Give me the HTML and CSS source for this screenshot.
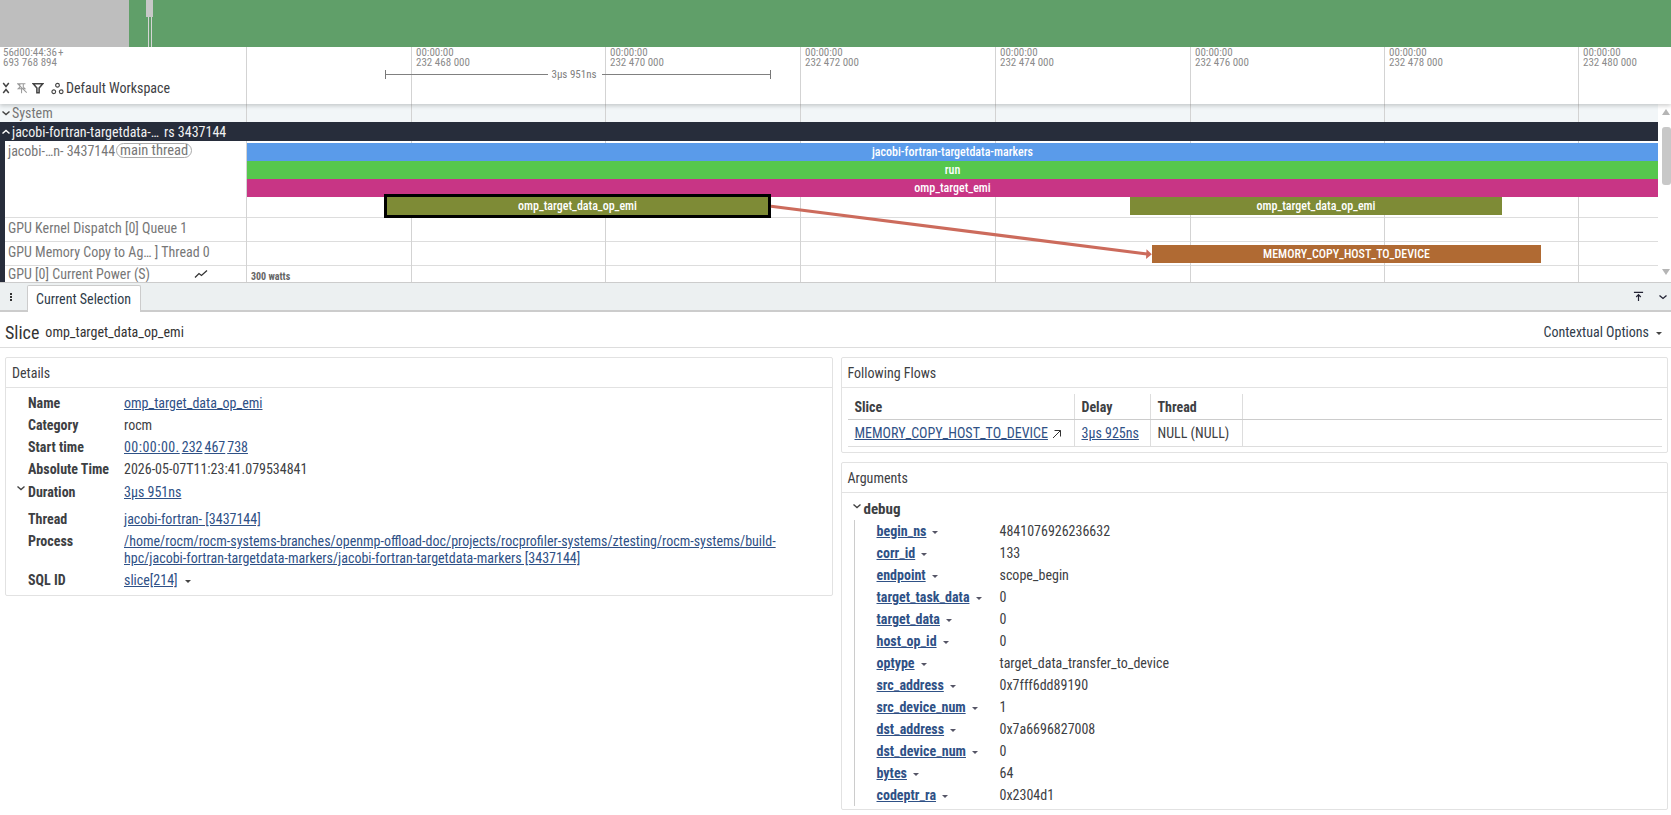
FILE: index.html
```html
<!DOCTYPE html>
<html lang="en">
<head>
<meta charset="utf-8">
<title>Trace viewer</title>
<link rel="stylesheet" href="styles.css">
</head>
<body>
<div class="app">
  <div class="overview">
    <div class="ov-gray"></div>
    <div class="ov-green"></div>
    <div class="ov-handle"></div>
    <div class="ov-line"></div>
  </div>

  <div class="timeline">
    <div class="ticks">
      <div class="tick" style="left:246px"></div>
      <div class="tick" style="left:411px"><span>00:00:00<br>232 468 000</span></div>
      <div class="tick" style="left:605px"><span>00:00:00<br>232 470 000</span></div>
      <div class="tick" style="left:800px"><span>00:00:00<br>232 472 000</span></div>
      <div class="tick" style="left:995px"><span>00:00:00<br>232 474 000</span></div>
      <div class="tick" style="left:1190px"><span>00:00:00<br>232 476 000</span></div>
      <div class="tick" style="left:1384px"><span>00:00:00<br>232 478 000</span></div>
      <div class="tick" style="left:1578px"><span>00:00:00<br>232 480 000</span></div>
    </div>

    <div class="header">
      <div class="header-left">
        <div class="origin">56d00:44:36<span class="thin">+</span><br>693 768 894</div>
        <div class="toolbar">
          <svg class="ic ic-collapse" viewBox="0 0 8 12"><path d="M1.200 1 4 4.500 6.800 1M1.200 11 4 7.500 6.800 11" fill="none" stroke="#444" stroke-width="1.500"/></svg>
          <svg class="ic ic-pin" viewBox="0 0 14 14"><path d="M2 2h9M4.500 2v4L2.500 8h8l-2-2V2M6.500 8v5M1.500 1.500l11 11" fill="none" stroke="#999" stroke-width="1.200"/></svg>
          <svg class="ic ic-filter" viewBox="0 0 14 14"><path d="M1.500 2h11L8.300 7v5.500H5.700V7z" fill="none" stroke="#444" stroke-width="1.800"/></svg>
          <svg class="ic ic-ws" viewBox="0 0 14 14"><g fill="none" stroke="#444" stroke-width="1.200"><circle cx="7" cy="3.500" r="2"/><circle cx="3" cy="10.500" r="2"/><circle cx="11" cy="10.500" r="2"/></g></svg>
          <span class="ws-name">Default Workspace</span>
        </div>
      </div>
      <div class="measure">
        <span class="measure-label">3µs 951ns</span>
      </div>
    </div>

    <div class="tracks">
      <div class="tracks-main">
        <div class="sys-row">
          <svg class="chev" viewBox="0 0 10 10"><path d="M1.500 3.500 5 6.500 8.500 3.500" fill="none" stroke="#444" stroke-width="1.500"/></svg>
          <span>System</span>
        </div>
        <div class="group-row">
          <svg class="chev" viewBox="0 0 10 10"><path d="M1.500 6.500 5 3.500 8.500 6.500" fill="none" stroke="#fff" stroke-width="1.500"/></svg>
          <span class="group-name">jacobi-fortran-targetdata-…</span>
          <span class="group-pid">rs 3437144</span>
        </div>
        <div class="rows">
          <div class="row row-thread">
            <div class="label"><span>jacobi-…n- 3437144</span><span class="chip">main thread</span></div>
            <div class="lane">
              <div class="slice s-blue">jacobi-fortran-targetdata-markers</div>
              <div class="slice s-green">run</div>
              <div class="slice s-magenta">omp_target_emi</div>
              <div class="slice s-olive s-selected">omp_target_data_op_emi</div>
              <div class="slice s-olive s-olive2">omp_target_data_op_emi</div>
            </div>
          </div>
          <div class="row row-gpu">
            <div class="label">GPU Kernel Dispatch [0] Queue 1</div>
            <div class="lane"></div>
          </div>
          <div class="row row-gpu">
            <div class="label">GPU Memory Copy to Ag… ] Thread 0</div>
            <div class="lane">
              <div class="slice s-orange">MEMORY_COPY_HOST_TO_DEVICE</div>
            </div>
          </div>
          <div class="row row-power">
            <div class="label">GPU [0] Current Power (S)
              <svg class="ic-line" viewBox="0 0 14 10"><path d="M1 8.500 5 4.500 7.500 6.500 13 1.500" fill="none" stroke="#333" stroke-width="1.300"/></svg>
            </div>
            <div class="lane"><span class="watts">300 watts</span></div>
          </div>
          <svg class="flow" viewBox="0 0 1658 141">
            <path d="M771 65.300 1147 113" fill="none" stroke="#cc6b5c" stroke-width="3"/>
            <path d="M1151.800 113.300 1146.500 108.300 1146 118z" fill="#cc6b5c"/>
          </svg>
        </div>
      </div>
      <div class="scrollbar">
        <div class="sb-up"></div>
        <div class="sb-thumb"></div>
        <div class="sb-down"></div>
      </div>
    </div>
  </div>

  <div class="tabbar">
    <span class="tab-menu"><i></i><i></i><i></i></span>
    <div class="tab">Current Selection</div>
    <div class="tab-actions">
      <svg class="ic-top" viewBox="0 0 12 12"><path d="M1 1.500h10M6 11V4M3.500 6.500 6 4 8.500 6.500" fill="none" stroke="#223" stroke-width="1.300"/></svg>
      <svg class="ic-down" viewBox="0 0 10 10"><path d="M1.500 3.500 5 6.500 8.500 3.500" fill="none" stroke="#223" stroke-width="1.300"/></svg>
    </div>
  </div>

  <div class="title-bar">
    <span class="title-main">Slice</span>
    <span class="title-sub">omp_target_data_op_emi</span>
    <span class="ctx">Contextual Options<b class="caret"></b></span>
  </div>

  <div class="panels">
    <div class="col">
      <section class="panel">
        <h3 class="panel-head">Details</h3>
        <div class="details">
          <div class="kv"><b>Name</b><a>omp_target_data_op_emi</a></div>
          <div class="kv"><b>Category</b><span>rocm</span></div>
          <div class="kv"><b>Start time</b><span><a class="stamp">00:00:00.</a><a class="gap">232</a><a class="gap">467</a><a class="gap">738</a></span></div>
          <div class="kv"><b>Absolute Time</b><span>2026-05-07T11:23:41.079534841</span></div>
          <div class="kv kv-dur">
            <svg class="chev-key" viewBox="0 0 10 10"><path d="M1.500 3.500 5 6.500 8.500 3.500" fill="none" stroke="#444" stroke-width="1.400"/></svg>
            <b>Duration</b><a>3µs 951ns</a>
          </div>
          <div class="kv"><b>Thread</b><a>jacobi-fortran- [3437144]</a></div>
          <div class="kv kv-proc"><b>Process</b><a>/home/rocm/rocm-systems-branches/openmp-offload-doc/projects/rocprofiler-systems/ztesting/rocm-systems/build-hpc/jacobi-fortran-targetdata-markers/jacobi-fortran-targetdata-markers [3437144]</a></div>
          <div class="kv"><b>SQL ID</b><span><a>slice[214]</a><b class="caret"></b></span></div>
        </div>
      </section>
    </div>
    <div class="col">
      <section class="panel">
        <h3 class="panel-head">Following Flows</h3>
        <div class="flows">
          <div class="flow-line flow-h">
            <div class="c1">Slice</div><div class="c2">Delay</div><div class="c3">Thread</div><div class="c4"></div>
          </div>
          <div class="flow-line">
            <div class="c1"><a>MEMORY_COPY_HOST_TO_DEVICE</a><svg class="ic-ext" viewBox="0 0 10 10"><path d="M1 9 8.500 1.500M2.500 1.500h6v6" fill="none" stroke="#333" stroke-width="1"/></svg></div>
            <div class="c2"><a>3µs 925ns</a></div>
            <div class="c3">NULL (NULL)</div>
            <div class="c4"></div>
          </div>
        </div>
      </section>
      <section class="panel panel-args">
        <h3 class="panel-head">Arguments</h3>
        <div class="args">
          <div class="debug-head">
            <svg class="chev-key" viewBox="0 0 10 10"><path d="M1.500 3.500 5 6.500 8.500 3.500" fill="none" stroke="#444" stroke-width="1.400"/></svg>
            <b>debug</b>
          </div>
          <div class="arg-list">
            <div class="arg"><span class="arg-k"><a>begin_ns</a><i class="caret"></i></span><span>4841076926236632</span></div>
            <div class="arg"><span class="arg-k"><a>corr_id</a><i class="caret"></i></span><span>133</span></div>
            <div class="arg"><span class="arg-k"><a>endpoint</a><i class="caret"></i></span><span>scope_begin</span></div>
            <div class="arg"><span class="arg-k"><a>target_task_data</a><i class="caret"></i></span><span>0</span></div>
            <div class="arg"><span class="arg-k"><a>target_data</a><i class="caret"></i></span><span>0</span></div>
            <div class="arg"><span class="arg-k"><a>host_op_id</a><i class="caret"></i></span><span>0</span></div>
            <div class="arg"><span class="arg-k"><a>optype</a><i class="caret"></i></span><span>target_data_transfer_to_device</span></div>
            <div class="arg"><span class="arg-k"><a>src_address</a><i class="caret"></i></span><span>0x7fff6dd89190</span></div>
            <div class="arg"><span class="arg-k"><a>src_device_num</a><i class="caret"></i></span><span>1</span></div>
            <div class="arg"><span class="arg-k"><a>dst_address</a><i class="caret"></i></span><span>0x7a6696827008</span></div>
            <div class="arg"><span class="arg-k"><a>dst_device_num</a><i class="caret"></i></span><span>0</span></div>
            <div class="arg"><span class="arg-k"><a>bytes</a><i class="caret"></i></span><span>64</span></div>
            <div class="arg"><span class="arg-k"><a>codeptr_ra</a><i class="caret"></i></span><span>0x2304d1</span></div>
          </div>
        </div>
      </section>
    </div>
  </div>
</div>
</body>
</html>
```

FILE: styles.css
```css
* { box-sizing: border-box; }
html, body { margin: 0; height: 100%; }
body {
  font-family: Roboto, "Liberation Sans", sans-serif;
  font-stretch: 75%;
  font-size: 14px;
  color: #3d4043;
  background: #fff;
  overflow: hidden;
}
.app { width: 1671px; height: 815px; display: flex; flex-direction: column; overflow: hidden; }

/* overview */
.overview { position: relative; height: 47px; display: flex; flex: none; }
.ov-gray { width: 129px; background: #bebebe; }
.ov-green { flex: 1; background: #609f69; }
.ov-handle { position: absolute; left: 146px; top: 0; width: 7px; height: 17px; background: #c8c8c8; }
.ov-line { position: absolute; left: 148px; top: 17px; width: 4px; height: 30px; border-left: 1px solid #d5d5d5; border-right: 1px solid #d5d5d5; }

/* timeline */
.timeline { position: relative; height: 235px; flex: none; overflow: hidden; background: #fff; }
.ticks { position: absolute; inset: 0; z-index: 1; pointer-events: none; }
.tick { position: absolute; top: 0; bottom: 0; width: 1px; background: #d3d3d3; }
.tick span { position: absolute; left: 5px; top: 1px; font-size: 11px; line-height: 10px; color: #8b8b8b; white-space: nowrap; }
.header { height: 57px; position: relative; display: flex; box-shadow: 0 2px 4px rgba(0,0,0,.18); z-index: 3; }
.header-left { width: 246px; flex: none; display: flex; flex-direction: column; }
.origin { font-size: 11px; line-height: 10px; color: #8b8b8b; padding: 1px 0 0 3px; height: 32px; }
.thin { margin-left: 1px; }
.toolbar { display: flex; align-items: center; height: 16px; margin-top: 1px; color: #444; }
.ws-name { font-size: 14px; color: #3d4043; margin-left: 2px; }
.ic { display: block; flex: none; }
.ic-collapse { width: 8px; height: 12px; margin-left: 2px; }
.ic-pin { width: 12px; height: 12px; margin-left: 6px; }
.ic-filter { width: 12px; height: 12px; margin-left: 4px; }
.ic-ws { width: 13px; height: 13px; margin-left: 7px; }
.measure {
  position: absolute; left: 385px; top: 23px; width: 386px; height: 9px;
  border-left: 1px solid #777; border-right: 1px solid #777;
  display: flex; align-items: center; justify-content: center;
}
.measure::before { content: ""; position: absolute; left: 0; right: 0; top: 4px; height: 1px; background: #808080; }
.measure-label { position: relative; background: #fff; padding: 0 5px 0 3px; margin-right: 6px; font-size: 11px; color: #808080; white-space: nowrap; }

.tracks { display: flex; height: 178px; position: relative; }
.tracks-main { width: 1658px; flex: none; position: relative; }
.sys-row { height: 18px; background: #f2f6f8; display: flex; align-items: center; padding-left: 1px; gap: 1px; color: #777; font-size: 14px; position: relative; }
.chev { width: 10px; height: 10px; flex: none; }
.group-row { height: 19px; background: #272d3b; color: #f2f2f2; display: flex; align-items: center; padding-left: 1px; font-size: 14px; position: relative; z-index: 2; gap: 1px; }
.group-name { width: 151px; white-space: nowrap; }
.group-pid { white-space: nowrap; }
.rows { position: relative; border-left: 5px solid #272d3b; height: 141px; }
.row { display: flex; border-bottom: 1px solid #ddd; }
.row-thread { height: 77px; }
.row-gpu { height: 24px; }
.row-power { height: 16px; border-bottom: 0; }
.label { width: 242px; flex: none; padding-left: 3px; font-size: 14px; color: #777; white-space: nowrap; position: relative; line-height: 20px; }
.row-power .label { line-height: 15px; padding-top: 1px; }
.chip { display: inline-block; border: 1px solid #aaa; border-radius: 8px; line-height: 13px; padding: 0 3px; margin-left: 1px; color: #777; font-size: 14.500px; vertical-align: 1px; }
.lane { flex: 1; position: relative; }
.slice { position: absolute; height: 18px; line-height: 19px; color: #fff; font-weight: 500; font-size: 12px; text-align: center; z-index: 2; white-space: nowrap; }
.s-blue { left: 0; right: 0; top: 2px; background: #5a9bea; }
.s-green { left: 0; right: 0; top: 20px; background: #56c74d; }
.s-magenta { left: 0; right: 0; top: 38px; background: #c83585; }
.s-olive { top: 56px; background: #7e8b36; }
.s-selected { left: 137px; width: 387px; top: 53px; height: 24px; line-height: 19px; border: 3px solid #000; z-index: 3; }
.s-olive2 { left: 883px; width: 372px; }
.s-orange { left: 905px; width: 389px; top: 3px; background: #b06a33; }
.ic-line { position: absolute; left: 189px; top: 3px; width: 14px; height: 10px; }
.watts { position: absolute; left: 4px; top: 6px; line-height: 10px; font-size: 10px; font-weight: 700; color: #666; z-index: 2; }
.flow { position: absolute; left: -5px; top: 0; width: 1658px; height: 141px; z-index: 4; pointer-events: none; }
.scrollbar { width: 13px; background: #fff; position: relative; flex: none; z-index: 2; }
.sb-up, .sb-down { position: absolute; left: 4px; width: 0; height: 0; border-left: 4px solid transparent; border-right: 4px solid transparent; }
.sb-up { top: 5px; border-bottom: 6px solid #b5b5b5; }
.sb-down { bottom: 7px; border-top: 6px solid #b5b5b5; }
.sb-thumb { position: absolute; left: 4px; top: 23px; width: 9px; height: 58px; background: #c8c8c8; border-radius: 3px; }

/* tabs */
.tabbar { height: 30px; flex: none; background: #ecf0f1; border-top: 1px solid #ccc; border-bottom: 2px solid #ccc; display: flex; align-items: flex-end; position: relative; z-index: 4; }
.tab-menu { width: 27px; display: flex; flex-direction: column; align-items: center; gap: 1px; align-self: center; padding-left: 2px; padding-right: 7px; }
.tab-menu i { width: 2px; height: 2px; background: #333; display: block; }
.tab { height: 27px; margin-bottom: -2px; background: #fff; border: 1px solid #ccc; border-bottom: 0; border-radius: 2px 2px 0 0; padding: 0 8px; line-height: 27px; font-size: 14px; color: #2f3c4a; width: 114px; white-space: nowrap; }
.tab-actions { margin-left: auto; align-self: center; display: flex; align-items: center; }
.ic-top { width: 11px; height: 11px; margin-right: 14px; display: block; }
.ic-down { width: 10px; height: 10px; margin-right: 3px; display: block; }

.title-bar { height: 36px; flex: none; display: flex; align-items: center; border-bottom: 1px solid #ddd; padding: 5px 9px 0 5px; }
.title-main { font-size: 18px; color: #333; }
.title-sub { font-size: 14px; margin-left: 6px; color: #333; }
.ctx { margin-left: auto; color: #2f3c4a; font-size: 14px; }
.caret { display: inline-block; width: 0; height: 0; border-left: 3px solid transparent; border-right: 3px solid transparent; border-top: 3px solid #444; margin-left: 7px; vertical-align: 2px; }

/* panels */
.panels { display: flex; gap: 8px; padding: 9px 3px 0 5px; flex: 1; min-height: 0; }
.col { flex: 1; display: flex; flex-direction: column; gap: 9px; min-width: 0; }
.panel { border: 1px solid #e2e2e2; border-radius: 2px; }
.panel-head { margin: 0; height: 30px; line-height: 31px; font-size: 14px; font-weight: 400; color: #3d4043; padding-left: 6px; border-bottom: 1px solid #e2e2e2; }
a { color: #2f5186; text-decoration: underline; }

.details { padding: 4px 0 4px; }
.kv { display: flex; min-height: 22px; line-height: 22px; padding-left: 22px; position: relative; }
.kv > b { width: 96px; flex: none; font-weight: 700; color: #3d4043; }
.kv > a, .kv > span { color: #3d4043; }
.kv a { color: #2f5186; }
.stamp { letter-spacing: .45px; }
.gap { margin-left: 2px; }
.kv-dur { height: 27px; margin-top: 1px; }
.chev-key { position: absolute; left: 10px; top: 2px; width: 10px; height: 10px; }
.kv-proc { line-height: 17px; padding-top: 3px; padding-bottom: 2px; }
.kv-proc > b { line-height: 17px; }
.kv-proc > a { flex: 1; padding-right: 50px; }

.flows { padding: 6px 5px 5px 6px; }
.flow-line { display: flex; height: 27px; line-height: 26px; border-bottom: 1px solid #ddd; }
.flow-h { height: 26px; font-weight: 700; border-bottom: 1px solid #ccc; }
.c1, .c2, .c3 { border-right: 1px solid #ddd; padding-left: 7px; white-space: nowrap; }
.c1 { width: 227px; }
.c2 { width: 76px; }
.c3 { width: 92px; }
.c4 { flex: 1; }
.ic-ext { width: 10px; height: 10px; margin-left: 4px; vertical-align: -1px; }

.panel-args { height: 348px; }
.args { padding: 3px 0 0 11px; }
.debug-head { height: 24px; line-height: 26px; position: relative; padding-left: 11px; font-size: 15px; color: #3d4043; }
.debug-head .chev-key { left: -1px; top: 5px; }
.arg-list { border-left: 1px solid #ccc; margin-left: 1px; padding-left: 22px; }
.arg { display: flex; height: 22px; line-height: 22px; color: #3d4043; }
.arg-k { width: 123px; flex: none; white-space: nowrap; }
.arg-k a { font-weight: 700; }
.arg-k .caret { margin-left: 6px; border-top-color: #556; }
```
